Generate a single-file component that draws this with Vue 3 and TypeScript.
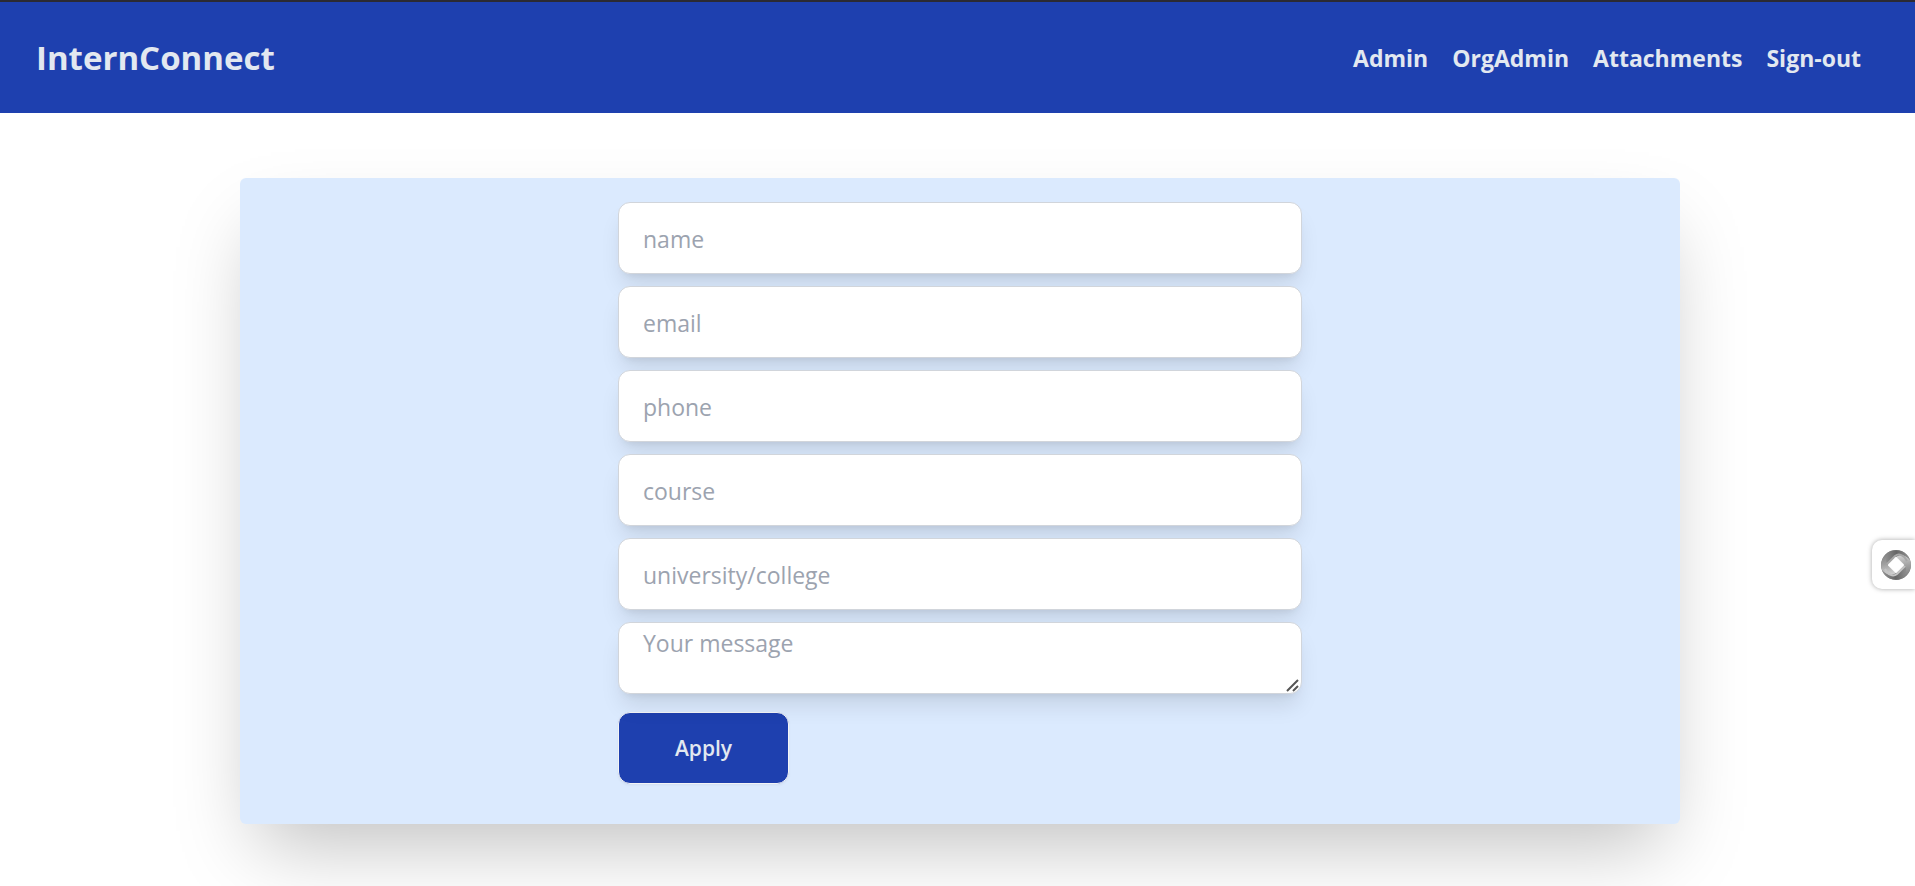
<script setup lang="ts">
import { reactive } from 'vue'

type Field = 'name' | 'email' | 'phone' | 'course' | 'university'

const links: string[] = ['Admin', 'OrgAdmin', 'Attachments', 'Sign-out']

const fields: { key: Field; label: string; type: string }[] = [
  { key: 'name', label: 'name', type: 'text' },
  { key: 'email', label: 'email', type: 'email' },
  { key: 'phone', label: 'phone', type: 'tel' },
  { key: 'course', label: 'course', type: 'text' },
  { key: 'university', label: 'university/college', type: 'text' },
]

const form = reactive({ name: '', email: '', phone: '', course: '', university: '', message: '' })
</script>

<template>
  <div class="page">
    <header class="header">
      <a class="brand" href="#">InternConnect</a>
      <nav class="nav">
        <a v-for="link in links" :key="link" href="#">{{ link }}</a>
      </nav>
    </header>

    <main class="main">
      <section class="panel">
        <form class="form" @submit.prevent>
          <input
            v-for="field in fields"
            :key="field.key"
            v-model="form[field.key]"
            class="control"
            :type="field.type"
            :name="field.key"
            :placeholder="field.label"
            :aria-label="field.label"
          />
          <div class="message">
            <textarea
              v-model="form.message"
              class="control area"
              name="message"
              placeholder="Your message"
              aria-label="Your message"
            ></textarea>
            <svg class="grip" viewBox="0 0 14 14" aria-hidden="true">
              <path d="M1 12 12 1M7 12 12 7" />
            </svg>
          </div>
          <button class="apply" type="submit">Apply</button>
        </form>
      </section>
    </main>

    <button class="widget" type="button" aria-label="Open assistant">
      <svg viewBox="0 0 30 30" aria-hidden="true">
        <defs>
          <linearGradient id="bladeDark" gradientUnits="userSpaceOnUse" x1="6" y1="10" x2="27" y2="6">
            <stop offset="0" stop-color="#8a8a8a" />
            <stop offset="0.5" stop-color="#666" />
            <stop offset="1" stop-color="#8c8c8c" />
          </linearGradient>
          <linearGradient id="bladeLight" gradientUnits="userSpaceOnUse" x1="6" y1="10" x2="27" y2="6">
            <stop offset="0" stop-color="#cfcfcf" />
            <stop offset="0.5" stop-color="#a0a0a0" />
            <stop offset="1" stop-color="#808080" />
          </linearGradient>
          <path
            id="blade"
            d="M7 15 15 7C19 4 25 5 29 10A15 15 0 0 0 10 1C5 5 4 11 7 15z"
          />
        </defs>
        <circle cx="15" cy="15" r="15" fill="#858585" />
        <use href="#blade" fill="url(#bladeDark)" />
        <use href="#blade" fill="url(#bladeLight)" transform="rotate(90 15 15)" />
        <use href="#blade" fill="url(#bladeDark)" transform="rotate(180 15 15)" />
        <use href="#blade" fill="url(#bladeLight)" transform="rotate(270 15 15)" />
        <path d="M6 14 14 6c4-3 9-1 12 5" fill="none" stroke="#a8a8a8" stroke-width="2" />
        <path d="M24 16l-8 8c-4 3-9 1-12-5" fill="none" stroke="#c4c4c4" stroke-width="2" />
        <rect x="9" y="9" width="12" height="12" rx="1" fill="#fff" transform="rotate(45 15 15)" />
      </svg>
    </button>
  </div>
</template>

<style>
body {
  margin: 0;
  background: #fff;
}
</style>

<style scoped>
.page {
  font-family: 'Open Sans', 'Noto Sans', sans-serif;
  color: #e2e8f0;
}

.page *,
.page {
  box-sizing: border-box;
}

.header {
  display: flex;
  align-items: center;
  justify-content: space-between;
  height: 113px;
  padding: 0 54px 0 36px;
  border-top: 2px solid #2b2a33;
  background: #1e40af;
  font-weight: 700;
}

.header a {
  color: inherit;
  text-decoration: none;
}

.brand {
  font-size: 33px;
  line-height: 48px;
}

.nav {
  display: flex;
  gap: 24px;
  font-size: 23px;
  line-height: 36px;
}

.main {
  padding: 65px 235px 62px 240px;
  overflow: hidden;
}

.panel {
  display: flex;
  justify-content: center;
  padding: 24px 24px 40px;
  border-radius: 6px;
  background: #dbeafe;
  box-shadow: 0 38px 75px -18px rgba(0, 0, 0, 0.25);
}

.form {
  display: flex;
  flex-direction: column;
  gap: 12px;
  width: 100%;
  max-width: 684px;
}

.control {
  display: block;
  width: 100%;
  height: 72px;
  padding: 2px 24px 0;
  border: 1px solid #d1d5db;
  border-radius: 12px;
  outline: none;
  background: #fff;
  color: #374151;
  font: inherit;
  font-size: 23px;
  line-height: 36px;
  box-shadow:
    0 15px 22px -4px rgba(0, 0, 0, 0.1),
    0 6px 9px -6px rgba(0, 0, 0, 0.1);
}

.control::placeholder {
  color: #9ca3af;
  opacity: 1;
}

.message {
  position: relative;
}

.area {
  resize: none;
}

.grip {
  position: absolute;
  right: 2px;
  bottom: 1px;
  width: 14px;
  height: 14px;
  fill: none;
  stroke: #555;
  stroke-width: 2;
  pointer-events: none;
}

.apply {
  width: 171px;
  height: 72px;
  margin-top: 6px;
  padding: 0;
  border: 1px solid #f3f4f6;
  border-radius: 12px;
  background: #1e40af;
  color: #e2e8f0;
  font: inherit;
  font-size: 21px;
  font-weight: 600;
  line-height: 30px;
  box-shadow: 0 1px 3px rgba(0, 0, 0, 0.05);
}

.widget {
  position: fixed;
  top: 540px;
  right: 0;
  width: 43px;
  height: 49px;
  padding: 0 0 0 9px;
  border: 0;
  border-radius: 10px 0 0 10px;
  background: #fff;
  box-shadow: 0 0 5px rgba(0, 0, 0, 0.35);
}

.widget svg {
  display: block;
  width: 30px;
  height: 30px;
}
</style>
